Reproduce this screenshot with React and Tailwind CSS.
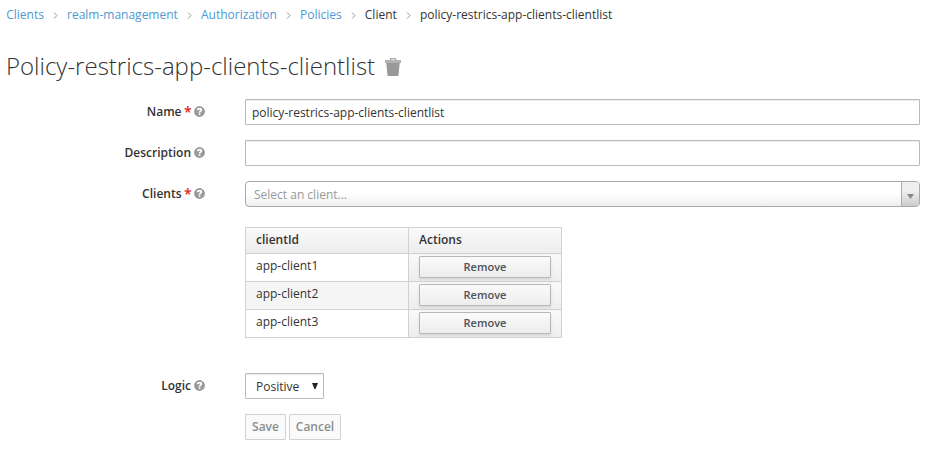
const crumbs = [
  { text: 'Clients', link: true },
  { text: 'realm-management', link: true },
  { text: 'Authorization', link: true },
  { text: 'Policies', link: true },
  { text: 'Client' },
  { text: 'policy-restrics-app-clients-clientlist' },
];

function Chevron() {
  return (
    <svg className="mx-[9.05px] mt-px h-[7px] w-[5px]" viewBox="0 0 5 7" fill="none" stroke="#999" strokeWidth="1">
      <path d="M1 0.5L4 3.5L1 6.5" />
    </svg>
  );
}

function Help() {
  return (
    <svg className="mb-px ml-[3px] h-[11px] w-[11px] shrink-0" viewBox="0 0 11 11">
      <circle cx="5.5" cy="5.5" r="5.4" fill="#999" />
      <path d="M3.6 4.2C3.8 2.9 4.6 2.6 5.5 2.6C6.7 2.6 7.3 3.2 7.3 4C7.3 5.2 5.5 5.1 5.5 6.7" fill="none" stroke="#fff" strokeWidth="1.7" />
      <rect x="4.6" y="7.4" width="1.8" height="1.5" fill="#fff" />
    </svg>
  );
}

function Trash() {
  return (
    <svg className="ml-[10px] mt-[2px] h-[18px] w-4" viewBox="0 0 16 18">
      <path d="M5.5 3V0.7H10.5V3" fill="none" stroke="#a8a8a8" strokeWidth="1.3" />
      <rect x="0" y="2" width="16" height="3" fill="#b2b2b2" />
      <path d="M1.3 5H14.7L13.4 18H2.6Z" fill="#999" />
    </svg>
  );
}

function Row({ label, required, children, className = '' }) {
  return (
    <div className={`flex ${className}`}>
      <div className="flex h-[26px] w-[205px] shrink-0 items-center justify-end font-semibold leading-[26px]">
        <span>{label}</span>
        {required && <span className="ml-[2.5px] w-[7px] pb-px text-[14px] font-semibold leading-[25px] text-[#dd1f26]">*</span>}
        <Help />
      </div>
      <div className="ml-10 flex grow">{children}</div>
    </div>
  );
}

const inputClass =
  'h-[26px] w-[675px] rounded-[1px] border border-[#bababa] bg-white px-[6px] shadow-[inset_0_1px_1px_rgba(0,0,0,0.075)] outline-none';

export default function App() {
  return (
    <div className="h-[455px] w-[940px] overflow-hidden bg-white font-['Open_Sans',sans-serif] text-[12px] text-[#333]">
      <nav className="flex h-[30px] items-center pl-[6.2px] leading-[20px]">
        {crumbs.map((c, i) => (
          <span key={c.text} className="flex items-center">
            {i > 0 && <Chevron />}
            <span className={c.link ? 'text-[#4d99d3]' : ''}>{c.text}</span>
          </span>
        ))}
      </nav>
      <h1 className="mt-[19px] flex h-[34px] items-center pl-[6px] text-[24px] font-light leading-[34px]">
        Policy-restrics-app-clients-clientlist
        <Trash />
      </h1>
      <form className="mt-4">
        <Row label="Name" required>
          <input className={inputClass} defaultValue="policy-restrics-app-clients-clientlist" />
        </Row>
        <Row label="Description" className="mt-[15px]">
          <input className={inputClass} />
        </Row>
        <Row label="Clients" required className="mt-[15px]">
          <div className="flex h-[26px] w-[675px] overflow-hidden rounded-[4px] border border-[#aaa] bg-[linear-gradient(to_top,#eee_0%,#fff_50%)]">
            <span className="grow pl-2 leading-[26px] text-[#999]">Select an client...</span>
            <span className="flex w-[18px] items-center justify-center border-l border-[#aaa] bg-[linear-gradient(to_top,#ccc_0%,#eee_60%)]">
              <svg className="mt-1 h-[5px] w-[7px]" viewBox="0 0 7 5">
                <path d="M0 0H7L3.5 5Z" fill="#888" />
              </svg>
            </span>
          </div>
        </Row>
        <table className="ml-[245px] mt-5 w-[317px] table-fixed border-collapse border border-[#d1d1d1] text-left">
          <colgroup>
            <col className="w-[163px]" />
            <col className="w-[153px]" />
          </colgroup>
          <thead>
            <tr className="h-[26px] bg-[linear-gradient(to_bottom,#fafafa,#ededed)]">
              <th className="border border-[#d1d1d1] px-[10px] pb-[2px] pt-0 font-semibold leading-[22px]">clientId</th>
              <th className="border border-[#d1d1d1] px-[10px] pb-[2px] pt-0 font-semibold leading-[22px]">Actions</th>
            </tr>
          </thead>
          <tbody>
            {['app-client1', 'app-client2', 'app-client3'].map((id) => (
              <tr key={id} className="h-[28px] even:bg-[#f5f5f5]">
                <td className="border border-[#d1d1d1] px-[10px] pb-[3px] pt-0 leading-[20px]">{id}</td>
                <td className="border border-[#d1d1d1] bg-[linear-gradient(to_bottom,#fafafa,#ededed)] px-0 pb-[2px] pt-0">
                  <button
                    type="button"
                    className="mx-[10px] block h-[22px] w-[132px] rounded-[1px] border border-[#b7b7b7] bg-[linear-gradient(to_bottom,#fafafa,#ededed)] text-[11px] font-semibold leading-[20px] text-[#4d5258] shadow-[0_2px_3px_rgba(0,0,0,0.1)]"
                  >
                    Remove
                  </button>
                </td>
              </tr>
            ))}
          </tbody>
        </table>
        <Row label="Logic" className="mt-[35px]">
          <div className="flex h-[26px] w-[79px] items-center justify-between rounded-[1px] border border-[#bababa] pl-[10px] pr-[5px] shadow-[inset_0_1px_1px_rgba(0,0,0,0.075)]">
            <span className="pt-[2px] leading-[24px]">Positive</span>
            <svg className="h-[6px] w-[6px]" viewBox="0 0 6 6">
              <path d="M0 0H6L3.5 6H2.5Z" fill="#222" />
            </svg>
          </div>
        </Row>
        <div className="ml-[245px] mt-[15px] flex gap-[3px] font-semibold leading-[24px] text-[#8b8d8f]">
          <button type="button" className="h-[26px] w-[41px] rounded-[1px] border border-[#d1d1d1] bg-[#fafafa]">Save</button>
          <button type="button" className="h-[26px] w-[52px] rounded-[1px] border border-[#d1d1d1] bg-[#fafafa]">Cancel</button>
        </div>
      </form>
    </div>
  );
}
